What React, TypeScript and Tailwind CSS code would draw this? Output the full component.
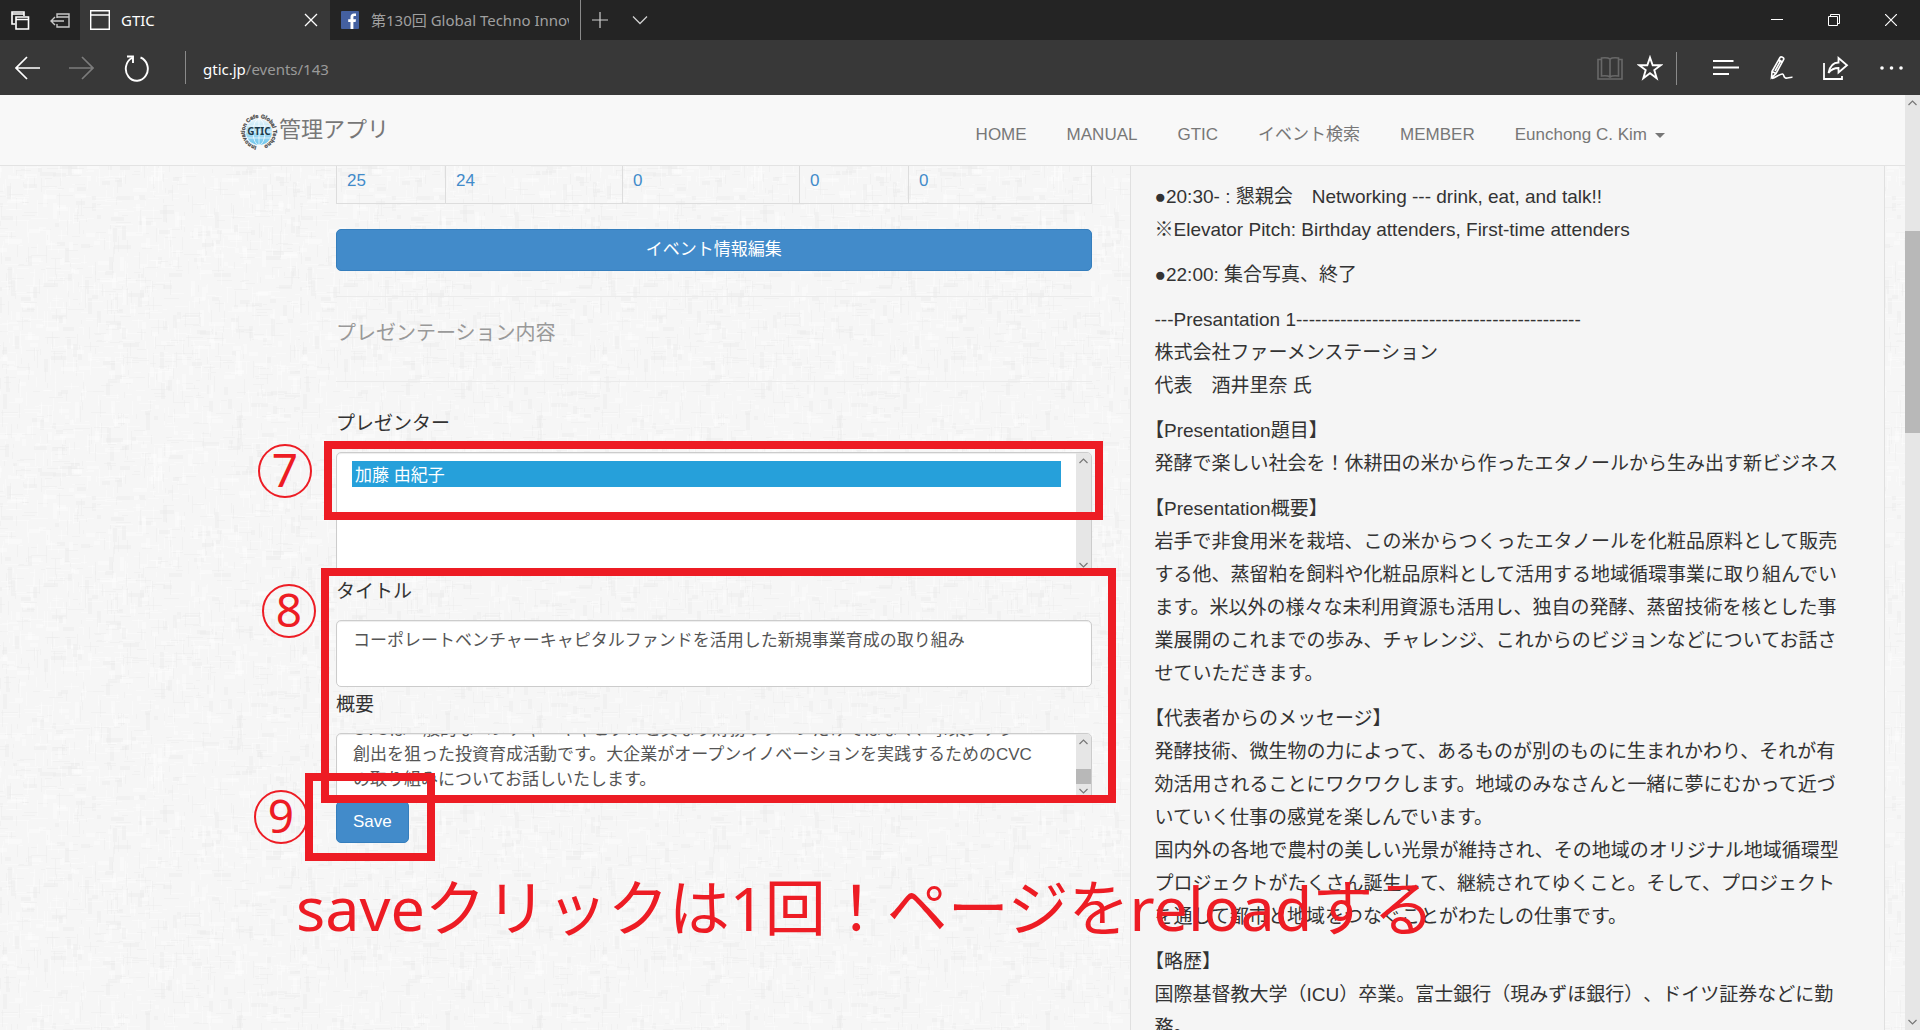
import { useLayoutEffect, useRef } from "react";
import type { ReactNode } from "react";

const sans = "font-['Liberation_Sans','Noto_Sans_CJK_JP',sans-serif]";
const ui = "font-['Noto_Sans','Noto_Sans_CJK_JP',sans-serif]";

function Icon({ w, h, children, className = "" }: { w: number; h: number; children: ReactNode; className?: string }) {
  return (
    <svg width={w} height={h} viewBox={`0 0 ${w} ${h}`} fill="none" stroke="currentColor" aria-hidden="true" className={`shrink-0 ${className}`}>
      {children}
    </svg>
  );
}

function TabStrip() {
  return (
    <div className="flex h-10 items-stretch bg-[#242424] text-white">
      <div className="flex w-20 shrink-0 items-center gap-5 pl-[11px]">
        <button aria-label="Tabs you've set aside">
          <Icon w={19} h={19}>
            <path d="M4 13H1V1h12v4M1 3h12" strokeWidth="1.600" />
            <path d="M5 6h12.500v12H5zM5 8.500h12" strokeWidth="1.600" />
          </Icon>
        </button>
        <button aria-label="Set these tabs aside" className="text-[#c8c8c8]">
          <Icon w={20} h={15}>
            <path d="M7 5V1h12v13H7v-3M7 4h12M1 8h13M5 4L1 8l4 4" strokeWidth="1.400" />
          </Icon>
        </button>
      </div>
      <div className="flex w-[250px] shrink-0 items-center bg-[#383838] pl-[10px] pr-3">
        <Icon w={20} h={20}>
          <path d="M.7.700h18.600v18.600H.7zM.7 5h18.600" strokeWidth="1.4" />
        </Icon>
        <span className={`${ui} ml-[11px] flex-1 text-[15px] leading-5`}>GTIC</span>
        <button aria-label="Close tab">
          <Icon w={14} h={14}>
            <path d="M1 1l12 12M13 1L1 13" strokeWidth="1.3" />
          </Icon>
        </button>
      </div>
      <div className="flex w-[251px] shrink-0 items-center border-r border-[#8a8a8a] pl-[11px] pr-[11px]">
        <svg width="18" height="18" viewBox="0 0 18 18" className="shrink-0" aria-hidden="true">
          <rect width="18" height="18" rx="1" fill="#4460a0" />
          <path d="M9.500 18v-7H7.200V8.200h2.300V6.100c0-2.400 1.400-3.600 3.500-3.600h2v2.600h-1.300c-1.100 0-1.300.5-1.300 1.300v1.800H15l-.4 2.800h-2.200v7z" fill="#fff" />
        </svg>
        <span className={`${ui} ml-3 overflow-hidden text-[15px] leading-5 whitespace-nowrap text-[#a0a0a0]`}>第130回 Global Techno Innovation Cafe</span>
      </div>
      <div className="flex flex-1 items-center gap-6 pl-[11px] text-[#d0d0d0]">
        <button aria-label="New tab">
          <Icon w={16} h={16}><path d="M8 0v16M0 8h16" strokeWidth="1.2" /></Icon>
        </button>
        <button aria-label="Show tab previews">
          <Icon w={16} h={10}><path d="M1 1.500l7 7 7-7" strokeWidth="1.3" /></Icon>
        </button>
      </div>
      <div className="flex items-center gap-[45px] pr-[23px]">
        <button aria-label="Minimize"><Icon w={12} h={12}><path d="M0 5.500h12" /></Icon></button>
        <button aria-label="Restore">
          <Icon w={12} h={12}><path d="M.5 2.500h9v9h-9zM2.500 2.500v-2h9v9h-2" /></Icon>
        </button>
        <button aria-label="Close"><Icon w={12} h={12}><path d="M0 0l12 12M12 0L0 12" strokeWidth="1.200" /></Icon></button>
      </div>
    </div>
  );
}

function AddressBar() {
  return (
    <div className="flex h-[55px] items-center bg-[#383838] text-white">
      <div className="flex items-center gap-[29px] pl-[15px]">
        <button aria-label="Back"><Icon w={25} h={24}><path d="M25 12H1M12 1L1 12l11 11" strokeWidth="1.700" /></Icon></button>
        <button aria-label="Forward" className="text-[#7c7c7c]"><Icon w={25} h={24}><path d="M0 12h24M13 1l11 11-11 11" strokeWidth="1.700" /></Icon></button>
        <button aria-label="Refresh">
          <Icon w={26} h={28}>
            <path d="M17.500 3.500A11 12 0 1 1 9 4M4 2.500h6v6.500" strokeWidth="1.900" />
          </Icon>
        </button>
      </div>
      <div className="ml-9 h-[33px] w-px bg-[#8a8a8a]" />
      <a href="#address" className={`${ui} ml-[17px] flex-1 pt-[2px] text-[15px] leading-5 text-[#9a9a9a]`}>
        <span className="text-white">gtic.jp</span>/events/143
      </a>
      <div className="flex items-center pr-[15px] pt-px">
        <button aria-label="Reading view" className="text-[#686868]">
          <Icon w={26} h={25}>
            <path d="M13 3c-2-1.500-5-1.500-8.500-1v18c3.500-.5 6.500-.5 8.500 1 2-1.500 5-1.500 8.500-1V2C18 1.500 15 1.500 13 3zM13 3v18M4.500 3.500H1V23h24V3.500h-3.500" strokeWidth="1.600" />
          </Icon>
        </button>
        <button aria-label="Add to favorites" className="ml-[14px]">
          <Icon w={26} h={26}>
            <path d="M13 2.500l2.700 7.700h8.100l-6.500 4.900 2.400 8.100-6.700-4.900-6.700 4.900 2.400-8.100-6.500-4.900h8.100z" strokeWidth="1.900" />
          </Icon>
        </button>
        <div className="ml-[13px] h-[33px] w-px bg-[#8a8a8a]" />
        <button aria-label="Hub" className="ml-9"><Icon w={26} h={24}><path d="M0 5h20.500M0 11.500h26M0 18h16" strokeWidth="1.800" /></Icon></button>
        <button aria-label="Make a web note" className="ml-[30px]">
          <Icon w={26} h={26}>
            <path d="M3 16.500L11 2.500c1-1.500 4.500 0 3.700 2L7 18.500l-4.500 4.200zM9.500 5l4 2.300M12 5l-6 11M3 16.500l4 2M3 23.500c4-1 8-5 10.500-4.500 2 .5.5 3 3 4 2 .7 4-1 7-.7" strokeWidth="1.600" />
          </Icon>
        </button>
        <button aria-label="Share" className="ml-[28px]">
          <Icon w={26} h={25}>
            <path d="M1 7v16h18v-3M5.500 17C7 9.500 10 6.500 15.500 6.500V2L24 9.200l-8.500 7.300V12C11 12 8 13.500 5.500 17z" strokeWidth="1.800" />
          </Icon>
        </button>
        <button aria-label="More" className="ml-[30px]">
          <Icon w={26} h={24}>
            <g fill="currentColor" stroke="none"><circle cx="3" cy="12" r="1.800" /><circle cx="12.500" cy="12" r="1.800" /><circle cx="22" cy="12" r="1.800" /></g>
          </Icon>
        </button>
      </div>
    </div>
  );
}

function Logo() {
  return (
    <svg width="40" height="40" viewBox="0 0 40 40" aria-label="Cafe Global Techno Innovation" className="shrink-0">
      <defs>
        <path id="ring" d="M17.500 34.200a14.200 14.200 0 1 1 5 0" />
        <linearGradient id="globe" x1="0" y1="0" x2="0" y2="1">
          <stop offset="0" stopColor="#e8f6fb" />
          <stop offset="1" stopColor="#6cc5ec" />
        </linearGradient>
      </defs>
      <circle cx="20" cy="20" r="13" fill="url(#globe)" />
      <g fill="none" stroke="#fff" strokeWidth="0.700">
        <ellipse cx="20" cy="20" rx="6" ry="13" />
        <path d="M20 7v26M8 26h24M7 20h26M9 14h22" />
      </g>
      <text fontSize="5.500" fontWeight="700" fill="#4d4d4d" stroke="#4d4d4d" strokeWidth="0.300" fontFamily="Liberation Sans, sans-serif">
        <textPath href="#ring">Innovation Cafe Global Techno</textPath>
      </text>
      <text x="20" y="23" textAnchor="middle" fontSize="10" fontWeight="700" fill="#1d3a4a" fontFamily="Noto Sans, sans-serif">GTIC</text>
    </svg>
  );
}

const links = ["HOME", "MANUAL", "GTIC", "イベント検索", "MEMBER"];

function SiteNav() {
  return (
    <header className="flex h-[71px] shrink-0 items-start justify-between border-b border-[#e3e3e3] bg-[#f8f8f8] pr-[240px] pl-[239px] text-[#777]">
      <a href="#home" className="flex items-center pt-[17px] text-[22px] leading-8">
        <Logo />
        <span className="-mt-1">管理アプリ</span>
      </a>
      <nav className="flex gap-10 pt-7 text-[17px] leading-6">
        {links.map((l) => (
          <a key={l} href="#nav" className="whitespace-nowrap">{l}</a>
        ))}
        <button className="flex items-center gap-2 whitespace-nowrap">
          Eunchong C. Kim
          <span className="border-x-5 border-t-5 border-x-transparent border-t-[#777]" />
        </button>
      </nav>
    </header>
  );
}

const strokes = (() => {
  let s = 7;
  const rnd = () => (s = (s * 16807) % 2147483647) / 2147483647;
  return Array.from({ length: 1800 }, () => {
    const horizontal = rnd() > 0.5;
    const len = 4 + Math.floor(rnd() * 14);
    const thick = rnd() > 0.75 ? 4 : 1;
    return {
      x: Math.floor(rnd() * 310) - 10,
      y: Math.floor(rnd() * 310) - 10,
      width: horizontal ? len : thick,
      height: horizontal ? thick : len,
      fill: rnd() > 0.45 ? "#ffffff" : "#e6e6e6",
    };
  });
})();

function LinenTexture() {
  return (
    <svg className="absolute inset-0 h-full w-full" aria-hidden="true">
      <defs>
        <pattern id="linen" width="300" height="300" patternUnits="userSpaceOnUse">
          <rect width="300" height="300" fill="#f6f6f6" />
          {strokes.map((r, i) => <rect key={i} {...r} opacity="0.35" />)}
        </pattern>
      </defs>
      <rect width="100%" height="100%" fill="url(#linen)" />
    </svg>
  );
}

function Chevron({ up }: { up?: boolean }) {
  return (
    <Icon w={9} h={6} className="text-[#777]">
      <path d={up ? "M.5 5l4-4 4 4" : "M.5 1l4 4 4-4"} strokeWidth="1.200" />
    </Icon>
  );
}

function FieldScrollbar({ thumb }: { thumb?: boolean }) {
  return (
    <div className="absolute top-px right-px bottom-px flex w-[15px] flex-col items-center justify-between rounded-r bg-[#e6e6e6] py-[5px]">
      <Chevron up />
      {thumb && <div className="mt-5 h-[15px] w-full bg-[#b8b8b8]" />}
      <Chevron />
    </div>
  );
}

const summary = `コーポレートベンチャーキャピタル（CVC）の概要をご紹介します。
CVCは一般的なベンチャーキャピタルと異なり財務リターンだけではなく、事業シナジー創出を狙った投資育成活動です。大企業がオープンイノベーションを実践するためのCVCの取り組みについてお話しいたします。`;

const field = "block w-full resize-none overflow-hidden rounded-[5px] border border-[#ccc] bg-white pl-4 text-[17px] leading-[25px] text-[#555] shadow-[inset_0_1px_1px_rgba(0,0,0,0.075)] outline-none";
const label = "block pt-px pb-3 text-[19px] leading-[33px] text-[#333]";

function PresentationForm() {
  const area = useRef<HTMLTextAreaElement>(null);
  useLayoutEffect(() => {
    if (area.current) area.current.scrollTop = area.current.scrollHeight;
  }, []);
  return (
    <form className="mt-6" onSubmit={(e) => e.preventDefault()}>
      <label htmlFor="presenter" className={label}>プレゼンター</label>
      <div className="relative">
        <select id="presenter" multiple defaultValue={["kato"]} className="block h-[122px] w-full appearance-none overflow-hidden rounded-[5px] border border-[#ccc] bg-white py-2 pr-[30px] pl-[15px] text-[17px] leading-[26px] shadow-[inset_0_1px_1px_rgba(0,0,0,0.075)] outline-none">
          <option value="kato" className="h-[26px] min-h-0 px-[3px] py-0 leading-6 checked:bg-[linear-gradient(#26a0da,#26a0da)] checked:text-white">加藤 由紀子</option>
        </select>
        <FieldScrollbar />
      </div>
      <label htmlFor="title" className={label}>タイトル</label>
      <textarea id="title" className={`${field} h-[67px] py-[7px] pr-4`} defaultValue="コーポレートベンチャーキャピタルファンドを活用した新規事業育成の取り組み" />
      <label htmlFor="summary" className={label}>概要</label>
      <div className="relative">
        <textarea id="summary" ref={area} className={`${field} h-[67px] py-[7px] pr-12`} defaultValue={summary} />
        <FieldScrollbar thumb />
      </div>
      <button type="submit" className="mt-px h-[42px] rounded-[5px] border border-[#357ebd] bg-[#428bca] px-4 text-[17px] leading-6 text-white">Save</button>
    </form>
  );
}

function LeftColumn() {
  return (
    <section>
      <table className="w-full table-fixed border-collapse text-[17px] leading-[25px] text-[#428bca]">
        <tbody>
          <tr>
            {[["25", "w-[109px]"], ["24", "w-[177px]"], ["0", "w-[177px]"], ["0", "w-[109px]"], ["0", "w-auto"]].map(([n, w], i) => (
              <td key={i} className={`${w} border-x border-b border-[#ddd] px-[10px] pt-[2px] pb-[10px]`}><a href="#members">{n}</a></td>
            ))}
          </tr>
        </tbody>
      </table>
      <button className="mt-[25px] h-[42px] w-full rounded-[5px] border border-[#357ebd] bg-[#428bca] text-[17px] leading-6 text-white">イベント情報編集</button>
      <hr className="mt-[25px] border-[#ebebeb]" />
      <h4 className="mt-[22px] text-[20px] leading-7 text-[#999]">プレゼンテーション内容</h4>
      <hr className="mt-[34px] border-[#ebebeb]" />
      <PresentationForm />
    </section>
  );
}

const paragraphs: string[][] = [
  ["●20:30- : 懇親会　Networking --- drink, eat, and talk!!", "※Elevator Pitch: Birthday attenders, First-time attenders"],
  ["●22:00: 集合写真、終了"],
  ["---Presantation 1---------------------------------------------", "株式会社ファーメンステーション", "代表　酒井里奈 氏"],
  ["【Presentation題目】", "発酵で楽しい社会を！休耕田の米から作ったエタノールから生み出す新ビジネス"],
  ["【Presentation概要】", "岩手で非食用米を栽培、この米からつくったエタノールを化粧品原料として販売する他、蒸留粕を飼料や化粧品原料として活用する地域循環事業に取り組んでいます。米以外の様々な未利用資源も活用し、独自の発酵、蒸留技術を核とした事業展開のこれまでの歩み、チャレンジ、これからのビジョンなどについてお話させていただきます。"],
  ["【代表者からのメッセージ】", "発酵技術、微生物の力によって、あるものが別のものに生まれかわり、それが有効活用されることにワクワクします。地域のみなさんと一緒に夢にむかって近づいていく仕事の感覚を楽しんでいます。", "国内外の各地で農村の美しい光景が維持され、その地域のオリジナル地域循環型プロジェクトがたくさん誕生して、継続されてゆくこと。そして、プロジェクトを通して都市と地域をつなぐことがわたしの仕事です。"],
  ["【略歴】", "国際基督教大学（ICU）卒業。富士銀行（現みずほ銀行）、ドイツ証券などに勤務。"],
];

function Description() {
  return (
    <article className="flex flex-col gap-3 border-x border-[#e0e0e0] bg-[#f5f5f5] pt-[14px] pr-[35px] pl-6 text-[19px] leading-[33px] text-[#333]">
      {paragraphs.map((lines, i) => (
        <div key={i}>
          {lines.map((l) => (
            <p key={l} className={l.startsWith("【") ? "[text-spacing-trim:trim-start]" : "[text-spacing-trim:space-all]"}>{l}</p>
          ))}
        </div>
      ))}
    </article>
  );
}

function Annotations() {
  const circle = "absolute flex h-[54px] w-[54px] items-center justify-center rounded-full border-2 border-[#ed1c24] pb-1 text-[46px] leading-none";
  const box = "absolute border-8 border-[#ed1c24]";
  return (
    <div className={`${ui} pointer-events-none absolute inset-0 text-[#ed1c24]`}>
      <span className={`${circle} top-[278px] left-[258px]`}>7</span>
      <span className={`${circle} top-[418px] left-[262px]`}>8</span>
      <span className={`${circle} top-[624px] left-[254px]`}>9</span>
      <div className={`${box} top-[275px] left-[324px] h-[79px] w-[779px]`} />
      <div className={`${box} top-[402px] left-[321px] h-[235px] w-[795px]`} />
      <div className={`${box} top-[607px] left-[305px] h-[88px] w-[130px]`} />
      <p className="absolute top-[702px] left-[296px] text-[61px] leading-[80px] whitespace-nowrap">saveクリックは1回！ページをreloadする</p>
    </div>
  );
}

export default function App() {
  return (
    <div lang="ja" className={`${sans} flex h-screen flex-col overflow-hidden`}>
      <TabStrip />
      <AddressBar />
      <div className="flex min-h-0 flex-1">
        <div className="flex min-w-0 flex-1 flex-col">
          <SiteNav />
          <main className="relative min-h-0 flex-1 overflow-hidden">
            <LinenTexture />
            <div className="relative grid grid-cols-2 gap-[38px] pr-5 pl-[336px]">
              <LeftColumn />
              <Description />
            </div>
            <Annotations />
          </main>
        </div>
        <div className="flex w-[15px] shrink-0 flex-col items-center bg-[#e6e6e6] py-[5px]">
          <Chevron up />
          <div className="mt-[125px] h-[202px] w-full bg-[#b8b8b8]" />
          <div className="flex-1" />
          <Chevron />
        </div>
      </div>
    </div>
  );
}
